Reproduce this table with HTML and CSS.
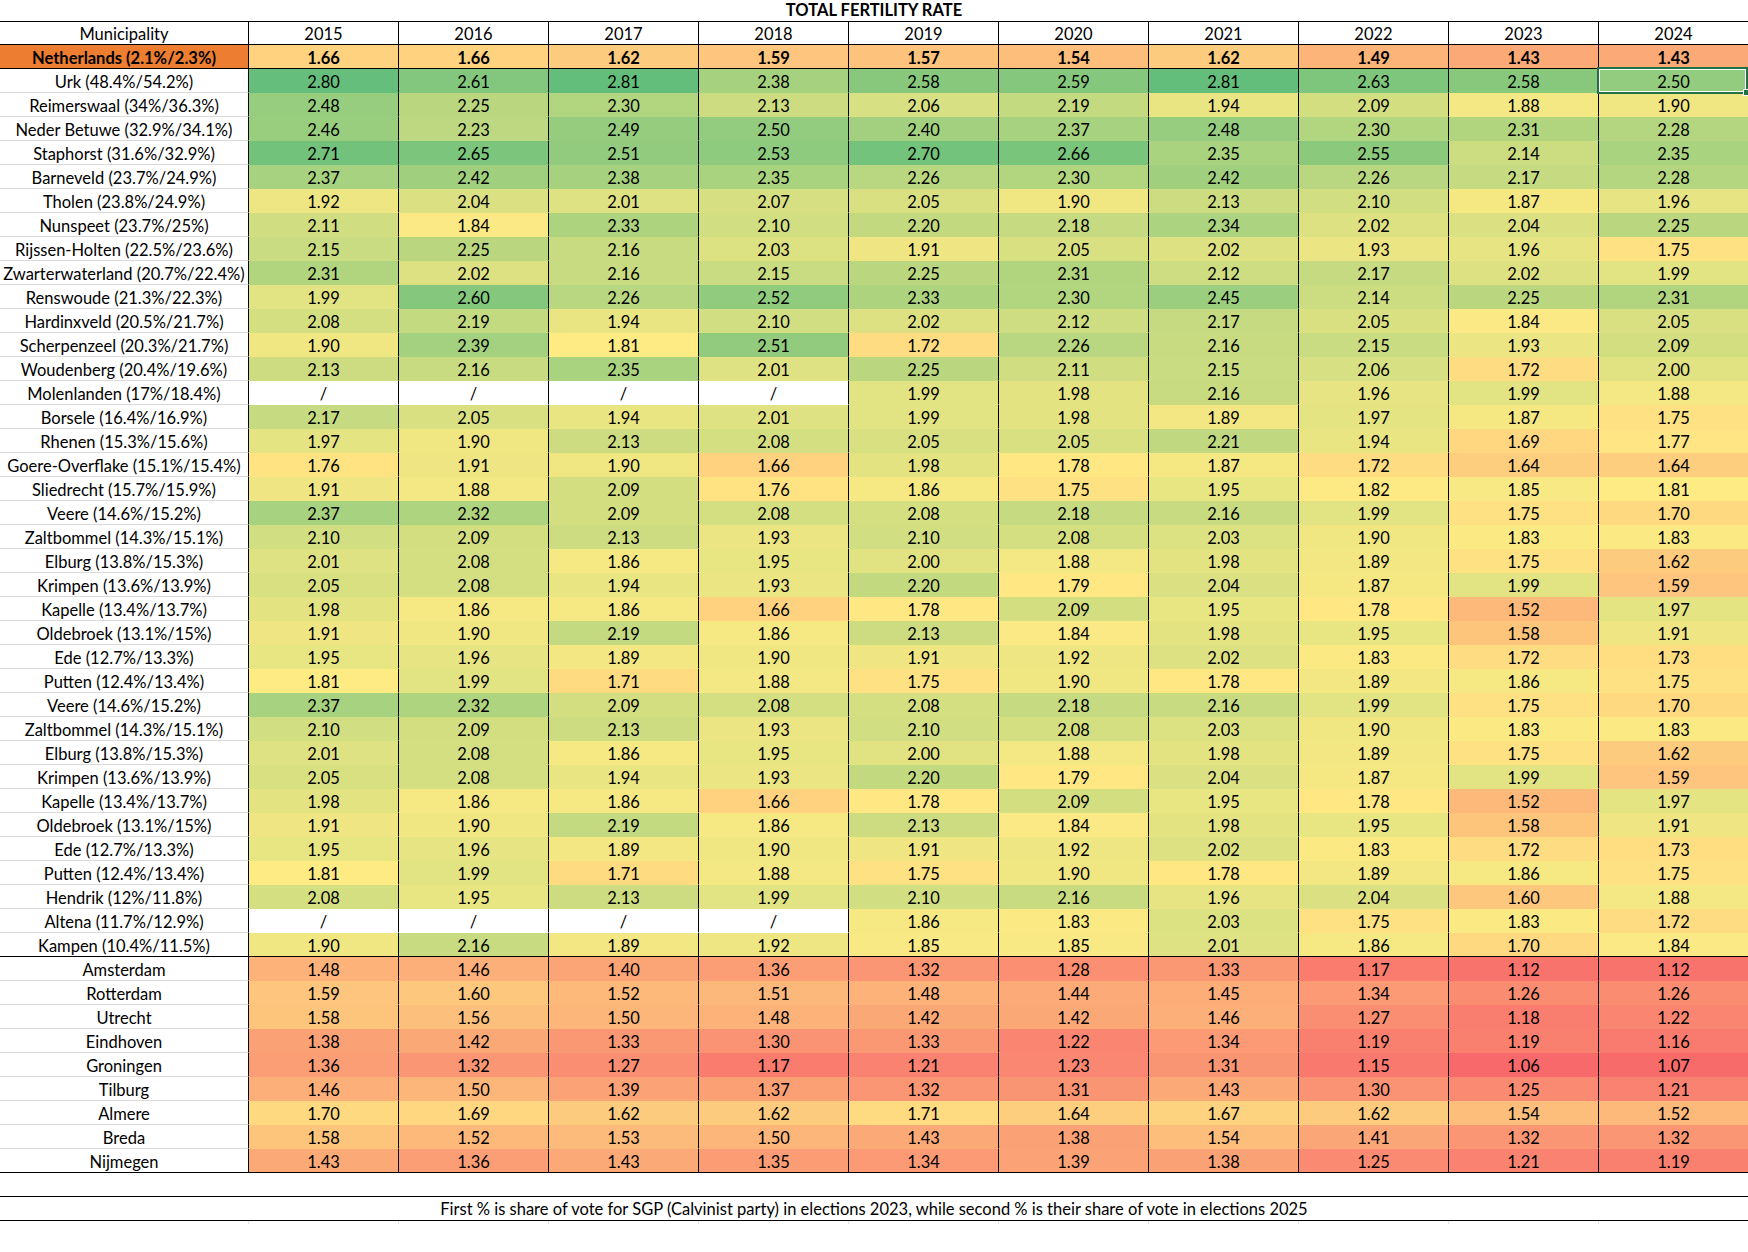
FILE: index.html
```html
<!DOCTYPE html>
<html lang="en">
<head>
<meta charset="utf-8">
<title>Total Fertility Rate</title>
<link rel="stylesheet" href="styles.css">
</head>
<body>
<div class="title">TOTAL FERTILITY RATE</div>
<table class="grid">
<colgroup><col class="c-name"><col class="c-year" span="10"></colgroup>
<thead>
<tr><th class="m">Municipality</th><th>2015</th><th>2016</th><th>2017</th><th>2018</th><th>2019</th><th>2020</th><th>2021</th><th>2022</th><th>2023</th><th>2024</th></tr>
</thead>
<tbody>
<tr class="nl sep"><td class="m">Netherlands (2.1%/2.3%)</td><td>1.66</td><td>1.66</td><td>1.62</td><td>1.59</td><td>1.57</td><td>1.54</td><td>1.62</td><td>1.49</td><td>1.43</td><td>1.43</td></tr>
<tr><td class="m">Urk (48.4%/54.2%)</td><td>2.80</td><td>2.61</td><td>2.81</td><td>2.38</td><td>2.58</td><td>2.59</td><td>2.81</td><td>2.63</td><td>2.58</td><td class="sel">2.50</td></tr>
<tr><td class="m">Reimerswaal (34%/36.3%)</td><td>2.48</td><td>2.25</td><td>2.30</td><td>2.13</td><td>2.06</td><td>2.19</td><td>1.94</td><td>2.09</td><td>1.88</td><td>1.90</td></tr>
<tr><td class="m">Neder Betuwe (32.9%/34.1%)</td><td>2.46</td><td>2.23</td><td>2.49</td><td>2.50</td><td>2.40</td><td>2.37</td><td>2.48</td><td>2.30</td><td>2.31</td><td>2.28</td></tr>
<tr><td class="m">Staphorst (31.6%/32.9%)</td><td>2.71</td><td>2.65</td><td>2.51</td><td>2.53</td><td>2.70</td><td>2.66</td><td>2.35</td><td>2.55</td><td>2.14</td><td>2.35</td></tr>
<tr><td class="m">Barneveld (23.7%/24.9%)</td><td>2.37</td><td>2.42</td><td>2.38</td><td>2.35</td><td>2.26</td><td>2.30</td><td>2.42</td><td>2.26</td><td>2.17</td><td>2.28</td></tr>
<tr><td class="m">Tholen (23.8%/24.9%)</td><td>1.92</td><td>2.04</td><td>2.01</td><td>2.07</td><td>2.05</td><td>1.90</td><td>2.13</td><td>2.10</td><td>1.87</td><td>1.96</td></tr>
<tr><td class="m">Nunspeet (23.7%/25%)</td><td>2.11</td><td>1.84</td><td>2.33</td><td>2.10</td><td>2.20</td><td>2.18</td><td>2.34</td><td>2.02</td><td>2.04</td><td>2.25</td></tr>
<tr><td class="m">Rijssen-Holten (22.5%/23.6%)</td><td>2.15</td><td>2.25</td><td>2.16</td><td>2.03</td><td>1.91</td><td>2.05</td><td>2.02</td><td>1.93</td><td>1.96</td><td>1.75</td></tr>
<tr><td class="m">Zwarterwaterland (20.7%/22.4%)</td><td>2.31</td><td>2.02</td><td>2.16</td><td>2.15</td><td>2.25</td><td>2.31</td><td>2.12</td><td>2.17</td><td>2.02</td><td>1.99</td></tr>
<tr><td class="m">Renswoude (21.3%/22.3%)</td><td>1.99</td><td>2.60</td><td>2.26</td><td>2.52</td><td>2.33</td><td>2.30</td><td>2.45</td><td>2.14</td><td>2.25</td><td>2.31</td></tr>
<tr><td class="m">Hardinxveld (20.5%/21.7%)</td><td>2.08</td><td>2.19</td><td>1.94</td><td>2.10</td><td>2.02</td><td>2.12</td><td>2.17</td><td>2.05</td><td>1.84</td><td>2.05</td></tr>
<tr><td class="m">Scherpenzeel (20.3%/21.7%)</td><td>1.90</td><td>2.39</td><td>1.81</td><td>2.51</td><td>1.72</td><td>2.26</td><td>2.16</td><td>2.15</td><td>1.93</td><td>2.09</td></tr>
<tr><td class="m">Woudenberg (20.4%/19.6%)</td><td>2.13</td><td>2.16</td><td>2.35</td><td>2.01</td><td>2.25</td><td>2.11</td><td>2.15</td><td>2.06</td><td>1.72</td><td>2.00</td></tr>
<tr><td class="m">Molenlanden (17%/18.4%)</td><td class="na">/</td><td class="na">/</td><td class="na">/</td><td class="na">/</td><td>1.99</td><td>1.98</td><td>2.16</td><td>1.96</td><td>1.99</td><td>1.88</td></tr>
<tr><td class="m">Borsele (16.4%/16.9%)</td><td>2.17</td><td>2.05</td><td>1.94</td><td>2.01</td><td>1.99</td><td>1.98</td><td>1.89</td><td>1.97</td><td>1.87</td><td>1.75</td></tr>
<tr><td class="m">Rhenen (15.3%/15.6%)</td><td>1.97</td><td>1.90</td><td>2.13</td><td>2.08</td><td>2.05</td><td>2.05</td><td>2.21</td><td>1.94</td><td>1.69</td><td>1.77</td></tr>
<tr><td class="m">Goere-Overflake (15.1%/15.4%)</td><td>1.76</td><td>1.91</td><td>1.90</td><td>1.66</td><td>1.98</td><td>1.78</td><td>1.87</td><td>1.72</td><td>1.64</td><td>1.64</td></tr>
<tr><td class="m">Sliedrecht (15.7%/15.9%)</td><td>1.91</td><td>1.88</td><td>2.09</td><td>1.76</td><td>1.86</td><td>1.75</td><td>1.95</td><td>1.82</td><td>1.85</td><td>1.81</td></tr>
<tr><td class="m">Veere (14.6%/15.2%)</td><td>2.37</td><td>2.32</td><td>2.09</td><td>2.08</td><td>2.08</td><td>2.18</td><td>2.16</td><td>1.99</td><td>1.75</td><td>1.70</td></tr>
<tr><td class="m">Zaltbommel (14.3%/15.1%)</td><td>2.10</td><td>2.09</td><td>2.13</td><td>1.93</td><td>2.10</td><td>2.08</td><td>2.03</td><td>1.90</td><td>1.83</td><td>1.83</td></tr>
<tr><td class="m">Elburg (13.8%/15.3%)</td><td>2.01</td><td>2.08</td><td>1.86</td><td>1.95</td><td>2.00</td><td>1.88</td><td>1.98</td><td>1.89</td><td>1.75</td><td>1.62</td></tr>
<tr><td class="m">Krimpen (13.6%/13.9%)</td><td>2.05</td><td>2.08</td><td>1.94</td><td>1.93</td><td>2.20</td><td>1.79</td><td>2.04</td><td>1.87</td><td>1.99</td><td>1.59</td></tr>
<tr><td class="m">Kapelle (13.4%/13.7%)</td><td>1.98</td><td>1.86</td><td>1.86</td><td>1.66</td><td>1.78</td><td>2.09</td><td>1.95</td><td>1.78</td><td>1.52</td><td>1.97</td></tr>
<tr><td class="m">Oldebroek (13.1%/15%)</td><td>1.91</td><td>1.90</td><td>2.19</td><td>1.86</td><td>2.13</td><td>1.84</td><td>1.98</td><td>1.95</td><td>1.58</td><td>1.91</td></tr>
<tr><td class="m">Ede (12.7%/13.3%)</td><td>1.95</td><td>1.96</td><td>1.89</td><td>1.90</td><td>1.91</td><td>1.92</td><td>2.02</td><td>1.83</td><td>1.72</td><td>1.73</td></tr>
<tr><td class="m">Putten (12.4%/13.4%)</td><td>1.81</td><td>1.99</td><td>1.71</td><td>1.88</td><td>1.75</td><td>1.90</td><td>1.78</td><td>1.89</td><td>1.86</td><td>1.75</td></tr>
<tr><td class="m">Veere (14.6%/15.2%)</td><td>2.37</td><td>2.32</td><td>2.09</td><td>2.08</td><td>2.08</td><td>2.18</td><td>2.16</td><td>1.99</td><td>1.75</td><td>1.70</td></tr>
<tr><td class="m">Zaltbommel (14.3%/15.1%)</td><td>2.10</td><td>2.09</td><td>2.13</td><td>1.93</td><td>2.10</td><td>2.08</td><td>2.03</td><td>1.90</td><td>1.83</td><td>1.83</td></tr>
<tr><td class="m">Elburg (13.8%/15.3%)</td><td>2.01</td><td>2.08</td><td>1.86</td><td>1.95</td><td>2.00</td><td>1.88</td><td>1.98</td><td>1.89</td><td>1.75</td><td>1.62</td></tr>
<tr><td class="m">Krimpen (13.6%/13.9%)</td><td>2.05</td><td>2.08</td><td>1.94</td><td>1.93</td><td>2.20</td><td>1.79</td><td>2.04</td><td>1.87</td><td>1.99</td><td>1.59</td></tr>
<tr><td class="m">Kapelle (13.4%/13.7%)</td><td>1.98</td><td>1.86</td><td>1.86</td><td>1.66</td><td>1.78</td><td>2.09</td><td>1.95</td><td>1.78</td><td>1.52</td><td>1.97</td></tr>
<tr><td class="m">Oldebroek (13.1%/15%)</td><td>1.91</td><td>1.90</td><td>2.19</td><td>1.86</td><td>2.13</td><td>1.84</td><td>1.98</td><td>1.95</td><td>1.58</td><td>1.91</td></tr>
<tr><td class="m">Ede (12.7%/13.3%)</td><td>1.95</td><td>1.96</td><td>1.89</td><td>1.90</td><td>1.91</td><td>1.92</td><td>2.02</td><td>1.83</td><td>1.72</td><td>1.73</td></tr>
<tr><td class="m">Putten (12.4%/13.4%)</td><td>1.81</td><td>1.99</td><td>1.71</td><td>1.88</td><td>1.75</td><td>1.90</td><td>1.78</td><td>1.89</td><td>1.86</td><td>1.75</td></tr>
<tr><td class="m">Hendrik (12%/11.8%)</td><td>2.08</td><td>1.95</td><td>2.13</td><td>1.99</td><td>2.10</td><td>2.16</td><td>1.96</td><td>2.04</td><td>1.60</td><td>1.88</td></tr>
<tr><td class="m">Altena (11.7%/12.9%)</td><td class="na">/</td><td class="na">/</td><td class="na">/</td><td class="na">/</td><td>1.86</td><td>1.83</td><td>2.03</td><td>1.75</td><td>1.83</td><td>1.72</td></tr>
<tr class="sep"><td class="m">Kampen (10.4%/11.5%)</td><td>1.90</td><td>2.16</td><td>1.89</td><td>1.92</td><td>1.85</td><td>1.85</td><td>2.01</td><td>1.86</td><td>1.70</td><td>1.84</td></tr>
<tr><td class="m">Amsterdam</td><td>1.48</td><td>1.46</td><td>1.40</td><td>1.36</td><td>1.32</td><td>1.28</td><td>1.33</td><td>1.17</td><td>1.12</td><td>1.12</td></tr>
<tr><td class="m">Rotterdam</td><td>1.59</td><td>1.60</td><td>1.52</td><td>1.51</td><td>1.48</td><td>1.44</td><td>1.45</td><td>1.34</td><td>1.26</td><td>1.26</td></tr>
<tr><td class="m">Utrecht</td><td>1.58</td><td>1.56</td><td>1.50</td><td>1.48</td><td>1.42</td><td>1.42</td><td>1.46</td><td>1.27</td><td>1.18</td><td>1.22</td></tr>
<tr><td class="m">Eindhoven</td><td>1.38</td><td>1.42</td><td>1.33</td><td>1.30</td><td>1.33</td><td>1.22</td><td>1.34</td><td>1.19</td><td>1.19</td><td>1.16</td></tr>
<tr><td class="m">Groningen</td><td>1.36</td><td>1.32</td><td>1.27</td><td>1.17</td><td>1.21</td><td>1.23</td><td>1.31</td><td>1.15</td><td>1.06</td><td>1.07</td></tr>
<tr><td class="m">Tilburg</td><td>1.46</td><td>1.50</td><td>1.39</td><td>1.37</td><td>1.32</td><td>1.31</td><td>1.43</td><td>1.30</td><td>1.25</td><td>1.21</td></tr>
<tr><td class="m">Almere</td><td>1.70</td><td>1.69</td><td>1.62</td><td>1.62</td><td>1.71</td><td>1.64</td><td>1.67</td><td>1.62</td><td>1.54</td><td>1.52</td></tr>
<tr><td class="m">Breda</td><td>1.58</td><td>1.52</td><td>1.53</td><td>1.50</td><td>1.43</td><td>1.38</td><td>1.54</td><td>1.41</td><td>1.32</td><td>1.32</td></tr>
<tr class="sep"><td class="m">Nijmegen</td><td>1.43</td><td>1.36</td><td>1.43</td><td>1.35</td><td>1.34</td><td>1.39</td><td>1.38</td><td>1.25</td><td>1.21</td><td>1.19</td></tr>
</tbody>
</table>
<div class="blank"></div>
<div class="note">First % is share of vote for SGP (Calvinist party) in elections 2023, while second % is their share of vote in elections 2025</div>
<div class="stubs"><span class="s-name"></span><span class="s-year"></span><span class="s-year"></span><span class="s-year"></span><span class="s-year"></span><span class="s-year"></span><span class="s-year"></span><span class="s-year"></span><span class="s-year"></span><span class="s-year"></span><span class="s-year"></span></div>
<script src="script.js"></script>
</body>
</html>
```

FILE: styles.css
```css
html, body {
  margin: 0;
  padding: 0;
  background: #ffffff;
  overflow: hidden;
}

body {
  font-family: Lato, "Liberation Sans", sans-serif;
  font-size: 16.5px;
  color: #000000;
}

.title {
  height: 21px;
  line-height: 21px;
  text-align: center;
  font-weight: bold;
}

.grid {
  border-collapse: separate;
  border-spacing: 0;
  table-layout: fixed;
  width: 1749px;
}

.c-name { width: 249px; }
.c-year { width: 150px; }

.grid th,
.grid td {
  box-sizing: border-box;
  height: 24px;
  padding: 0;
  text-align: center;
  vertical-align: bottom;
  line-height: 20px;
  white-space: nowrap;
  font-weight: normal;
  border-right: 1px solid #000000;
  border-bottom: 1px solid transparent;
}

.grid thead th {
  background: #ffffff;
  border-top: 1px solid #000000;
  border-bottom-color: #000000;
}

.grid td.m {
  background: #ffffff;
  border-bottom-color: #dadada;
}

.grid tr.sep td {
  border-bottom-color: #000000;
}

.grid tr.nl td {
  font-weight: bold;
}

.grid tr.nl td.m {
  background: #ed7d31;
}

.grid td.na {
  background: #ffffff;
}

.grid td.sel {
  position: relative;
}

.grid td.sel::after {
  content: "";
  position: absolute;
  left: -2px;
  top: -2px;
  width: 151px;
  height: 27px;
  box-sizing: border-box;
  border: 2px solid #217346;
  box-shadow: inset 0 0 0 1px #ffffff;
}

.grid td.sel::before {
  content: "";
  position: absolute;
  left: 144px;
  top: 20px;
  width: 7px;
  height: 7px;
  box-sizing: border-box;
  background: #217346;
  border: 1px solid #ffffff;
  z-index: 2;
}

.blank {
  height: 23px;
}

.note {
  box-sizing: border-box;
  height: 25px;
  padding-top: 2px;
  line-height: 20px;
  text-align: center;
  white-space: nowrap;
  border-top: 1px solid #000000;
  border-bottom: 1px solid #000000;
}

.stubs {
  display: flex;
  height: 3px;
}

.stubs span {
  flex: none;
  box-sizing: border-box;
  border-right: 1px solid #e3e3e3;
}

.s-name { width: 249px; }
.s-year { width: 150px; }
```

FILE: script.js
```js
(function () {
  var red = [248, 105, 107];
  var yellow = [255, 235, 132];
  var green = [99, 190, 123];
  var midpoint = 1.805;
  var cells = document.querySelectorAll('.grid tbody td:not(.m):not(.na)');
  var values = [];
  cells.forEach(function (td) {
    var v = parseFloat(td.textContent);
    if (!isNaN(v)) values.push(v);
  });
  var min = Math.min.apply(null, values);
  var max = Math.max.apply(null, values);
  function mix(a, b, t) {
    return a.map(function (x, i) { return Math.round(x + (b[i] - x) * t); });
  }
  cells.forEach(function (td) {
    var v = parseFloat(td.textContent);
    if (isNaN(v)) return;
    var c;
    if (v <= midpoint) {
      c = mix(red, yellow, (v - min) / (midpoint - min));
    } else {
      c = mix(yellow, green, (v - midpoint) / (max - midpoint));
    }
    td.style.backgroundColor = 'rgb(' + c.join(',') + ')';
  });
})();
```
